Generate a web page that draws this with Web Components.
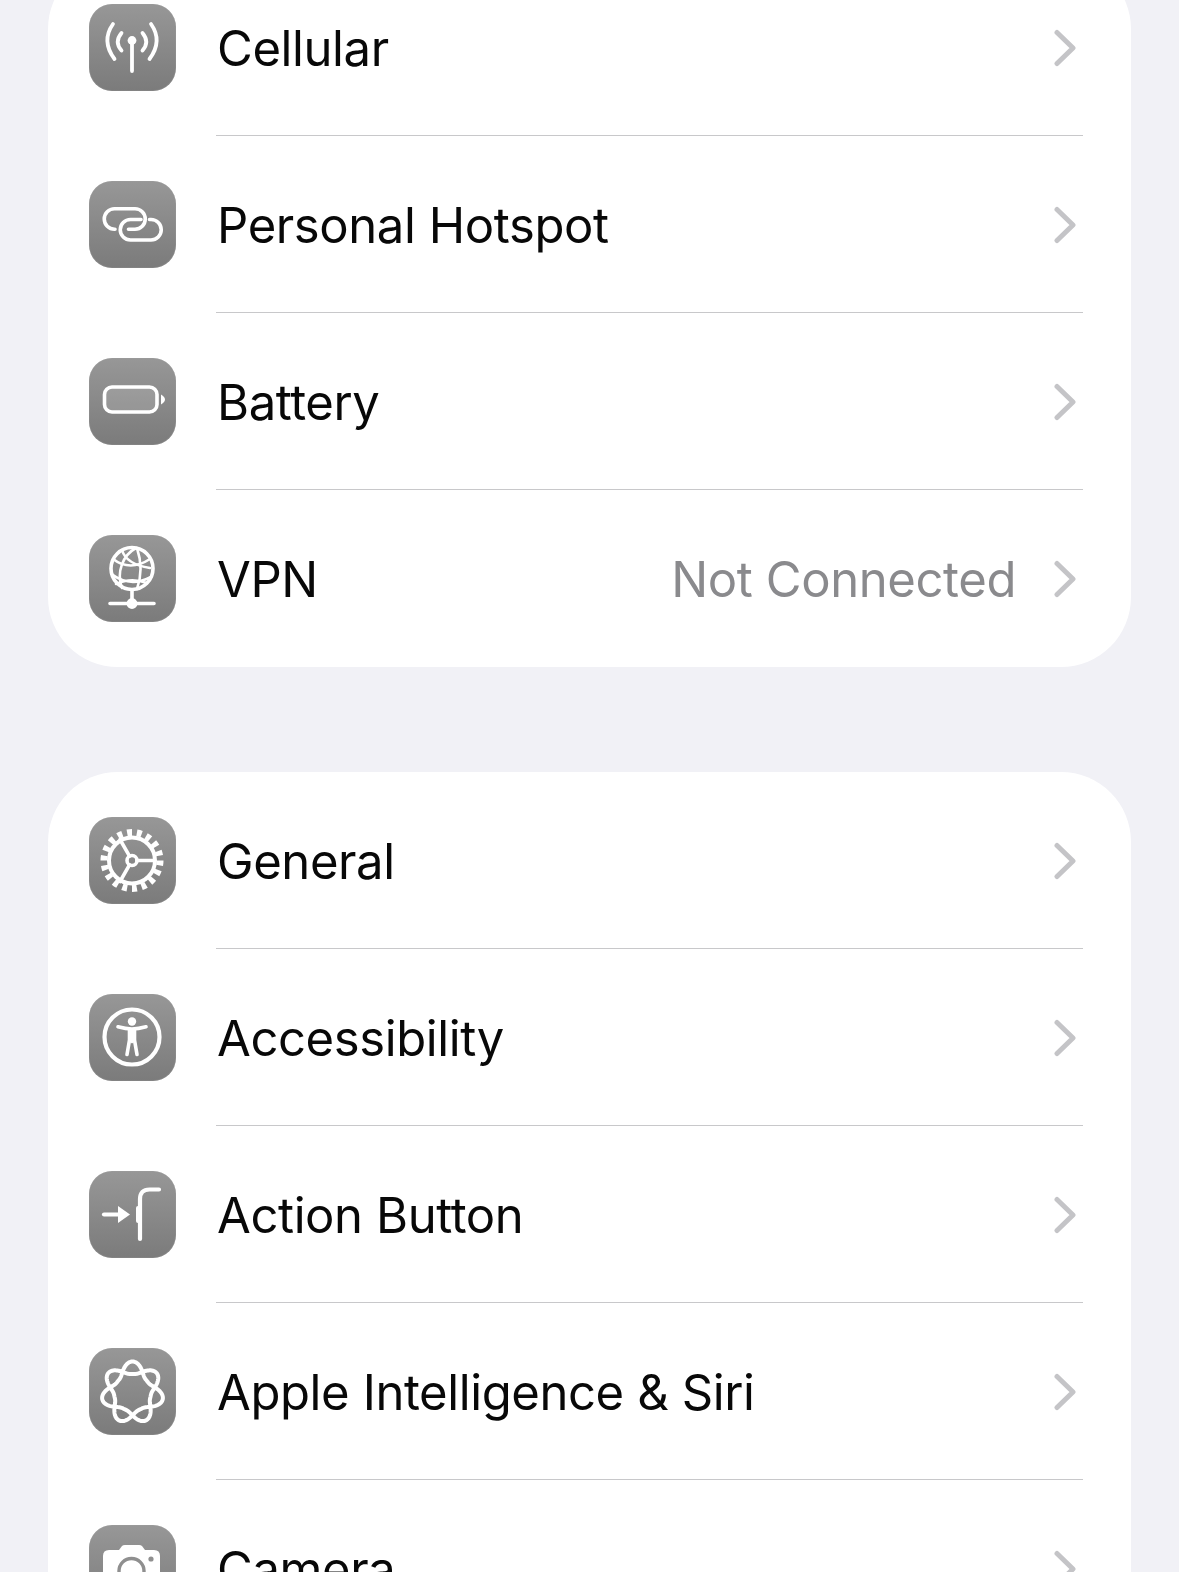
<!doctype html>
<html>
<head>
<meta charset="utf-8">
<title>Settings</title>
<style>
  html, body { margin: 0; height: 1572px; overflow: hidden; background: #f1f1f6; }
</style>
</head>
<body>
<settings-page>
  <settings-card>
    <settings-row icon="cellular">Cellular</settings-row>
    <settings-row icon="hotspot">Personal Hotspot</settings-row>
    <settings-row icon="battery">Battery</settings-row>
    <settings-row icon="vpn" value="Not Connected">VPN</settings-row>
  </settings-card>
  <settings-card>
    <settings-row icon="general">General</settings-row>
    <settings-row icon="accessibility">Accessibility</settings-row>
    <settings-row icon="action">Action Button</settings-row>
    <settings-row icon="intelligence">Apple Intelligence &amp; Siri</settings-row>
    <settings-row icon="camera">Camera</settings-row>
  </settings-card>
</settings-page>

<script>
// seven looped lobes, two turns round the centre
const loops = () => {
  const pts = []
  for (let i = 0; i <= 420; i++) {
    const t = i / 420 * Math.PI * 4
    const r = 18.5 + 12.5 * Math.pow((1 + Math.cos(3.5 * t)) / 2, 1.5)
    pts.push((43.5 + r * Math.sin(t)).toFixed(2) + ' ' + (44.5 - r * Math.cos(t)).toFixed(2))
  }
  return 'M' + pts.join('L') + 'Z'
}

const icons = {
  cellular: `
    <g class="s" stroke-width="3.8">
      <path d="M24 20Q12 37 25.5 55M32.5 29Q25 38 32.5 46.5M62 20Q74 37 60.5 55M53.5 29Q61 38 53.5 46.5"/>
      <path d="M43 37V67"/>
    </g>
    <circle class="f" cx="43" cy="36.5" r="4.4"/>`,
  hotspot: `
    <g class="s" stroke-width="3.6">
      <path d="M26 48.2H25.5A10.25 10.25 0 0 1 25.5 27.7H46A10.25 10.25 0 0 1 46 48.2H39.5"/>
      <path d="M60.5 38.5H62A10.25 10.25 0 0 1 62 59H41.5A10.25 10.25 0 0 1 41.5 38.5H52"/>
    </g>`,
  battery: `
    <rect x="15.5" y="29" width="52.5" height="25" rx="7.5" fill="#ffffff22" stroke="#fff" stroke-width="3.6"/>
    <path class="f" d="M72 36.5Q76 39 76 41.5Q76 44 72 46.5Z"/>`,
  vpn: `
    <g class="s" stroke-width="3.6">
      <circle cx="43" cy="33.5" r="21"/>
      <path d="M43 55V68M21 68.5H65"/>
    </g>
    <g class="s" stroke-width="2.6">
      <path d="M47 13C34 20 27 37 33 53M48 13C52 25 53 40 48 54M33 15C35 22 42 30 61 33"/>
      <path d="M24 24Q41 37 61 24M22.5 39Q41 53 62 42M27 49Q42 42 58 48"/>
    </g>
    <circle class="f" cx="43" cy="68.5" r="5.4"/>`,
  general: `
    <circle class="s butt" cx="43" cy="43.5" r="28" stroke-width="7" pathLength="36" stroke-dasharray="1 1"/>
    <circle class="s" cx="43" cy="43.5" r="23" stroke-width="4"/>
    <g class="s" stroke-width="3.6">
      <circle cx="43" cy="43.5" r="5"/>
      <path d="M48 43.5H65.5M40.5 39.2L31 22.5M40.5 47.8L31 64.5"/>
    </g>`,
  accessibility: `
    <circle class="s" cx="43" cy="43" r="27.5" stroke-width="4.2"/>
    <circle class="f" cx="43" cy="27.5" r="4.2"/>
    <g class="s" stroke-width="3.6">
      <path d="M29 32.800C35 34.500 39 35 43 35C47 35 51 34.500 57 32.800"/>
      <path d="M38 60.500L40.500 46V36M48 60.500L45.500 46V36"/>
    </g>
    <path class="f" d="M39.5 35H46.5V47L43 49.5L39.5 47Z"/>`,
  action: `
    <path class="s" stroke-width="4.2" d="M15 43.5H30"/>
    <path class="f" d="M29 35L41 43.5L29 52Z"/>
    <path class="s" stroke-width="4.2" d="M51 68V28Q51 18.500 60.5 18.500H70"/>
    <rect class="f" x="47" y="35" width="5" height="17" rx="2"/>`,
  intelligence: () => `<path class="s" stroke-width="4" d="${loops()}"/>`,
  camera: `
    <path class="f" d="M20 25H30L33 21Q34 20 36 20H50Q52 20 53 21L56 25H65Q71 25 71 31V63Q71 69 65 69H20Q14 69 14 63V31Q14 25 20 25Z"/>
    <circle class="g" cx="62" cy="34" r="2.600"/>
    <circle fill="none" stroke="#8f8f8f" stroke-width="3.4" cx="42.5" cy="46" r="12.5"/>`
}

customElements.define('settings-icon', class extends HTMLElement {
  constructor() {
    super()
    const icon = icons[this.getAttribute('name')]
    this.attachShadow({ mode: 'open' }).innerHTML = `
      <style>
        :host {
          display: block;
          flex: none;
          width: 87px;
          height: 87px;
          border-radius: 23px;
          background: linear-gradient(#979797, #7b7b7b);
          box-shadow: inset 0 0 0 1px #a5a5a533;
        }
        svg { display: block; width: 87px; height: 87px; }
        .s { fill: none; stroke: #fff; stroke-linecap: round; stroke-linejoin: round; }
        .s.butt { stroke-linecap: butt; }
        .f { fill: #fff; }
        .g { fill: #8f8f8f; }
      </style>
      <svg viewBox="0 0 87 87">${typeof icon === 'function' ? icon() : icon}</svg>
    `
  }
})

customElements.define('settings-row', class extends HTMLElement {
  constructor() {
    super()
    const value = this.getAttribute('value')
    this.attachShadow({ mode: 'open' }).innerHTML = `
      <style>
        :host {
          display: flex;
          align-items: center;
          height: 177px;
          padding-left: 41px;
        }
        .content {
          flex: 1;
          align-self: stretch;
          box-sizing: border-box;
          display: flex;
          align-items: center;
          margin: 0 48px 0 40px;
          padding: 2px 0 0 1px;
          border-bottom: 1px solid #c8c8ca;
        }
        :host(:last-child) .content { border-bottom-color: transparent; }
        .label { flex: 1; color: #080808; }
        .value { color: #8a8a8d; margin-right: 38px; }
        svg { display: block; flex: none; margin-right: 7px; }
      </style>
      <settings-icon name="${this.getAttribute('icon')}"></settings-icon>
      <div class="content">
        <span class="label"><slot></slot></span>
        ${value ? `<span class="value">${value}</span>` : ''}
        <svg width="22" height="38" viewBox="0 0 22 38">
          <path d="M3 3.5L19 19L3 34.5" fill="none" stroke="#c4c4c7" stroke-width="5" stroke-linecap="round" stroke-linejoin="round"/>
        </svg>
      </div>
    `
  }
})

customElements.define('settings-card', class extends HTMLElement {
  constructor() {
    super()
    this.attachShadow({ mode: 'open' }).innerHTML = `
      <style>
        :host {
          display: block;
          background: #fff;
          border-radius: 70px;
        }
      </style>
      <slot></slot>
    `
  }
})

customElements.define('settings-page', class extends HTMLElement {
  constructor() {
    super()
    this.attachShadow({ mode: 'open' }).innerHTML = `
      <style>
        :host {
          display: flex;
          flex-direction: column;
          gap: 105px;
          margin: -41px 48px 0;
          font: 400 49px Inter, "Liberation Sans", sans-serif;
          letter-spacing: -0.4px;
        }
      </style>
      <slot></slot>
    `
  }
})
</script>
</body>
</html>
